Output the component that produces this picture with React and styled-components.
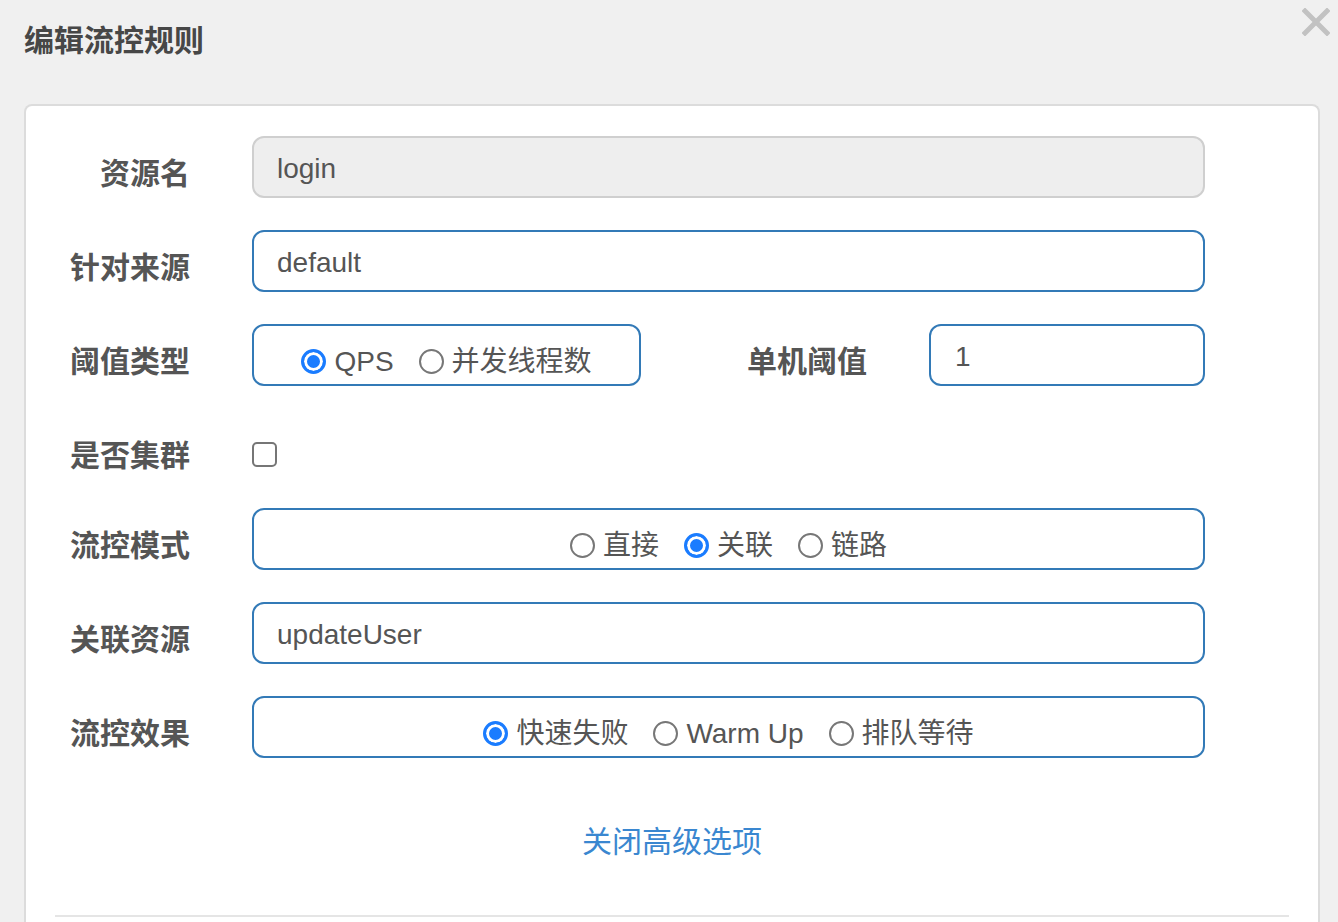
import React from "react";
import styled, { createGlobalStyle, css } from "styled-components";

const GlobalStyle = createGlobalStyle`
  html, body {
    margin: 0;
    padding: 0;
    background: #f0f0f0;
  }
  body {
    font-family: "Liberation Sans", "Noto Sans CJK SC", sans-serif;
    color: #555;
  }
`;

const BLUE = "#337ab7";

const Header = styled.div`
  display: flex;
  justify-content: space-between;
  height: 82px;
  padding: 0 8px 0 24px;
`;

const Title = styled.h4`
  margin: 0;
  align-self: center;
  font-size: 30px;
  line-height: 30px;
  font-weight: 700;
  color: #474747;
`;

const CloseButton = styled.button`
  align-self: flex-start;
  margin-top: 8px;
  width: 28px;
  height: 28px;
  padding: 0;
  border: 0;
  background: none;
  cursor: pointer;
`;

const Card = styled.div`
  margin: 22px 18px 0 24px;
  padding-top: 30px;
  background: #fff;
  border: 2px solid #dcdcdc;
  border-bottom: 0;
  border-radius: 8px 8px 0 0;
  min-height: 820px;
`;

const Row = styled.div`
  display: grid;
  grid-template-columns: 164px 1fr;
  column-gap: 62px;
  height: ${({ $short }) => ($short ? "58px" : "62px")};
  margin: 0 113px 32px 0;
`;

const Label = styled.label`
  display: flex;
  justify-content: flex-end;
  align-items: center;
  padding-top: 8px;
  height: 62px;
  box-sizing: border-box;
  font-size: 30px;
  font-weight: 700;
  color: #555;
  white-space: nowrap;
`;

const Field = styled.div`
  box-sizing: border-box;
  height: 62px;
  display: flex;
  align-items: center;
  padding: 3px 23px 0;
  border: 2px solid ${BLUE};
  border-radius: 12px;
  background: #fff;
  font-size: 28px;
  color: #555;
  ${({ $readOnly }) =>
    $readOnly &&
    css`
      background: #eee;
      border-color: #cfcfcf;
    `}
  ${({ $center }) =>
    $center &&
    css`
      justify-content: center;
      padding: 14px 0 0;
    `}
`;

const SplitRow = styled.div`
  display: flex;
`;

const GroupBox = styled(Field)`
  width: 389px;
  flex: none;
`;

const InlineLabel = styled(Label)`
  width: 226px;
  margin-right: 62px;
  flex: none;
`;

const GrowField = styled(Field)`
  flex: 1;
  padding-left: 24px;
`;

const RadioItem = styled.label`
  display: flex;
  align-items: center;
  gap: 8px;
  margin-right: 25px;
  font-size: 28px;
  line-height: 30px;
  color: #555;
  white-space: nowrap;
  &:last-child {
    margin-right: 0;
  }
`;

const Dot = styled.span`
  box-sizing: border-box;
  width: 25px;
  height: 25px;
  border-radius: 50%;
  flex: none;
  margin-top: -2px;
  ${({ $checked }) =>
    $checked
      ? css`
          border: 3px solid #1a7cff;
          background: #1a7cff;
          box-shadow: inset 0 0 0 3px #fff;
        `
      : css`
          border: 2px solid #777;
          background: #fff;
        `}
`;

const CheckBox = styled.span`
  box-sizing: border-box;
  display: block;
  width: 25px;
  height: 25px;
  margin-top: 24px;
  border: 2px solid #767676;
  border-radius: 5px;
  background: #fff;
`;

const ToggleLink = styled.a`
  display: block;
  padding-top: 37px;
  text-align: center;
  font-size: 30px;
  line-height: 30px;
  color: #3a87d0;
  text-decoration: none;
  cursor: pointer;
`;

const Divider = styled.hr`
  margin: 58px 29px 0 29px;
  border: 0;
  border-top: 2px solid #e5e5e5;
`;

function Radio({ checked, children }) {
  return (
    <RadioItem>
      <Dot $checked={checked} />
      {children}
    </RadioItem>
  );
}

function CloseIcon() {
  return (
    <svg width="28" height="28" viewBox="0 0 28 28">
      <path
        d="M3 3 L25 25 M25 3 L3 25"
        stroke="#c2c2c2"
        strokeWidth="5"
        strokeLinecap="square"
      />
    </svg>
  );
}

export default function App() {
  return (
    <>
      <GlobalStyle />
      <Header>
        <Title>编辑流控规则</Title>
        <CloseButton aria-label="close">
          <CloseIcon />
        </CloseButton>
      </Header>
      <Card>
        <Row>
          <Label>资源名</Label>
          <Field $readOnly>login</Field>
        </Row>
        <Row>
          <Label>针对来源</Label>
          <Field>default</Field>
        </Row>
        <Row>
          <Label>阈值类型</Label>
          <SplitRow>
            <GroupBox $center>
              <Radio checked>QPS</Radio>
              <Radio>并发线程数</Radio>
            </GroupBox>
            <InlineLabel>单机阈值</InlineLabel>
            <GrowField>1</GrowField>
          </SplitRow>
        </Row>
        <Row $short>
          <Label>是否集群</Label>
          <div>
            <CheckBox />
          </div>
        </Row>
        <Row>
          <Label>流控模式</Label>
          <Field $center>
            <Radio>直接</Radio>
            <Radio checked>关联</Radio>
            <Radio>链路</Radio>
          </Field>
        </Row>
        <Row>
          <Label>关联资源</Label>
          <Field>updateUser</Field>
        </Row>
        <Row>
          <Label>流控效果</Label>
          <Field $center>
            <Radio checked>快速失败</Radio>
            <Radio>Warm Up</Radio>
            <Radio>排队等待</Radio>
          </Field>
        </Row>
        <ToggleLink>关闭高级选项</ToggleLink>
        <Divider />
      </Card>
    </>
  );
}
